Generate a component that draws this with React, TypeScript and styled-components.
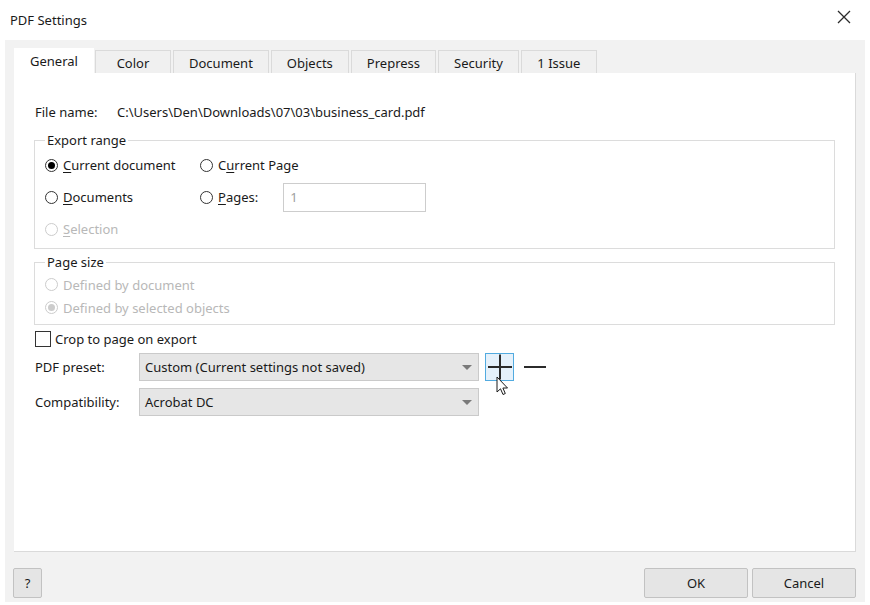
import styled, { createGlobalStyle } from "styled-components";

const GlobalStyle = createGlobalStyle`
  html, body {
    margin: 0;
    padding: 0;
    background: #ffffff;
  }
  body {
    font-family: "Noto Sans", "Open Sans", sans-serif;
    font-size: 13px;
    color: #1a1a1a;
  }
`;

const Window = styled.div`
  width: 870px;
  height: 605px;
  display: flex;
  flex-direction: column;
  background: #ffffff;
`;

const TitleBar = styled.div`
  height: 40px;
  display: flex;
  align-items: center;
  justify-content: space-between;
  padding: 0 18px 0 10px;
  box-sizing: border-box;
`;

const Title = styled.span`
  font-size: 13px;
  color: #1a1a1a;
`;

const CloseButton = styled.button`
  border: none;
  background: none;
  padding: 0;
  width: 16px;
  height: 16px;
  margin-top: -6px;
  display: flex;
  align-items: center;
  justify-content: center;
`;

const Body = styled.div`
  margin: 0 5px;
  height: 562px;
  background: #f2f2f2;
  display: flex;
  flex-direction: column;
  padding: 8px 9px 0 9px;
  box-sizing: border-box;
`;

const TabStrip = styled.div`
  display: flex;
  align-items: flex-end;
  gap: 2px;
  height: 25px;
`;

const Tab = styled.div<{ $active?: boolean }>`
  height: ${(p) => (p.$active ? "25px" : "23px")};
  min-width: ${(p) => (p.$active ? "80px" : "76px")};
  padding: 0 15px;
  box-sizing: border-box;
  display: flex;
  align-items: center;
  justify-content: center;
  background: ${(p) => (p.$active ? "#ffffff" : "#f0f0f0")};
  border: 1px solid ${(p) => (p.$active ? "#ffffff" : "#dadada")};
  border-bottom: none;
  color: #1a1a1a;
  padding-top: ${(p) => (p.$active ? "0" : "1px")};
  margin-right: ${(p) => (p.$active ? "-1px" : "0")};
`;

const Panel = styled.div`
  background: #ffffff;
  height: 479px;
  border-right: 1px solid #dadada;
  border-bottom: 1px solid #dadada;
  padding: 30px 20px 0 21px;
  box-sizing: border-box;
  display: flex;
  flex-direction: column;
`;

const FileRow = styled.div`
  display: flex;
  align-items: center;
  height: 18px;
  margin-bottom: 10px;
`;

const FieldLabel = styled.span<{ $width: number }>`
  width: ${(p) => p.$width}px;
  flex-shrink: 0;
`;

const Group = styled.fieldset<{ $rowHeight: number; $padTop: number; $padBottom: number }>`
  margin: 0 0 0 -1px;
  border: 1px solid #dcdcdc;
  padding: ${(p) => p.$padTop}px 10px ${(p) => p.$padBottom}px 10px;
  display: grid;
  grid-template-columns: 155px 1fr;
  grid-auto-rows: ${(p) => p.$rowHeight}px;
  align-items: center;
  min-width: 0;
  & + & {
    margin-top: 4px;
  }
`;

const Legend = styled.legend`
  padding: 0 2px;
  margin-left: 0;
  line-height: 18px;
  color: #1a1a1a;
`;

const Option = styled.label<{ $disabled?: boolean; $span?: boolean }>`
  display: flex;
  align-items: center;
  gap: 5px;
  color: ${(p) => (p.$disabled ? "#b8b8b8" : "#1a1a1a")};
  grid-column: ${(p) => (p.$span ? "1 / -1" : "auto")};
  white-space: nowrap;
`;

const Radio = styled.span<{ $checked?: boolean; $disabled?: boolean }>`
  width: 13px;
  height: 13px;
  border-radius: 50%;
  border: 1px solid ${(p) => (p.$disabled ? "#cccccc" : "#333333")};
  background: #ffffff;
  box-sizing: border-box;
  display: flex;
  align-items: center;
  justify-content: center;
  flex-shrink: 0;
  &::after {
    content: "";
    display: ${(p) => (p.$checked ? "block" : "none")};
    width: 7px;
    height: 7px;
    border-radius: 50%;
    background: ${(p) => (p.$disabled ? "#cccccc" : "#000000")};
  }
`;

const Key = styled.span`
  text-decoration: underline;
  text-underline-offset: 2px;
`;

const PagesCell = styled.div`
  display: flex;
  align-items: center;
`;

const PagesInput = styled.div`
  margin-left: 25px;
  width: 143px;
  height: 29px;
  border: 1px solid #cdcdcd;
  box-sizing: border-box;
  display: flex;
  align-items: center;
  padding-left: 6px;
  color: #a0a0a0;
  background: #ffffff;
`;

const CheckRow = styled.label`
  display: flex;
  align-items: center;
  gap: 4px;
  height: 20px;
  margin-top: 4px;
`;

const Checkbox = styled.span`
  width: 16px;
  height: 16px;
  border: 1px solid #333333;
  box-sizing: border-box;
  background: #ffffff;
`;

const FormRow = styled.div<{ $top: number }>`
  display: flex;
  align-items: center;
  margin-top: ${(p) => p.$top}px;
`;

const Select = styled.div`
  width: 340px;
  height: 28px;
  background: #e6e6e6;
  border: 1px solid #cacaca;
  box-sizing: border-box;
  display: flex;
  align-items: center;
  justify-content: space-between;
  padding: 0 6px 0 5px;
`;

const Caret = styled.span`
  width: 0;
  height: 0;
  border-left: 5px solid transparent;
  border-right: 5px solid transparent;
  border-top: 5px solid #7a7a7a;
`;

const IconButton = styled.button<{ $hover?: boolean }>`
  position: relative;
  width: 29px;
  height: 28px;
  margin-left: 6px;
  padding: 0;
  box-sizing: border-box;
  background: ${(p) => (p.$hover ? "#e5f1fb" : "transparent")};
  border: 1px solid ${(p) => (p.$hover ? "#52abe0" : "transparent")};
  display: flex;
  align-items: center;
  justify-content: center;
`;

const Pointer = styled.svg`
  position: absolute;
  left: 10px;
  top: 22px;
  pointer-events: none;
`;

const Footer = styled.div`
  display: flex;
  align-items: center;
  justify-content: space-between;
  padding: 16px 0 0 0;
  margin-left: -1px;
`;

const FooterButtons = styled.div`
  display: flex;
  gap: 4px;
`;

const DialogButton = styled.button<{ $width: number }>`
  width: ${(p) => p.$width}px;
  height: 30px;
  background: #e5e5e5;
  border: 1px solid #c2c2c2;
  border-radius: 2px;
  font-family: "Noto Sans", "Open Sans", sans-serif;
  font-size: 13px;
  color: #1a1a1a;
  padding: 0;
`;

const tabs = ["General", "Color", "Document", "Objects", "Prepress", "Security", "1 Issue"];

export default function App() {
  return (
    <Window>
      <GlobalStyle />
      <TitleBar>
        <Title>PDF Settings</Title>
        <CloseButton>
          <svg width="14" height="14" viewBox="0 0 14 14">
            <path d="M1 1 L13 13 M13 1 L1 13" stroke="#2b2b2b" strokeWidth="1.3" />
          </svg>
        </CloseButton>
      </TitleBar>
      <Body>
        <TabStrip>
          {tabs.map((t, i) => (
            <Tab key={t} $active={i === 0}>
              {t}
            </Tab>
          ))}
        </TabStrip>
        <Panel>
          <FileRow>
            <FieldLabel $width={82}>File name:</FieldLabel>
            <span>C:\Users\Den\Downloads\07\03\business_card.pdf</span>
          </FileRow>

          <Group $rowHeight={32} $padTop={0} $padBottom={3}>
            <Legend>Export range</Legend>
            <Option>
              <Radio $checked />
              <span>
                <Key>C</Key>urrent document
              </span>
            </Option>
            <Option>
              <Radio />
              <span>
                C<Key>u</Key>rrent Page
              </span>
            </Option>
            <Option>
              <Radio />
              <span>
                <Key>D</Key>ocuments
              </span>
            </Option>
            <PagesCell>
              <Option>
                <Radio />
                <span>
                  <Key>P</Key>ages:
                </span>
              </Option>
              <PagesInput>1</PagesInput>
            </PagesCell>
            <Option $disabled $span>
              <Radio $disabled />
              <span>
                <Key>S</Key>election
              </span>
            </Option>
          </Group>

          <Group $rowHeight={23} $padTop={2} $padBottom={5}>
            <Legend>Page size</Legend>
            <Option $disabled $span>
              <Radio $disabled />
              <span>Defined by document</span>
            </Option>
            <Option $disabled $span>
              <Radio $disabled $checked />
              <span>Defined by selected objects</span>
            </Option>
          </Group>

          <CheckRow>
            <Checkbox />
            <span>Crop to page on export</span>
          </CheckRow>

          <FormRow $top={4}>
            <FieldLabel $width={104}>PDF preset:</FieldLabel>
            <Select>
              <span>Custom (Current settings not saved)</span>
              <Caret />
            </Select>
            <IconButton $hover>
              <svg width="26" height="26" viewBox="0 0 26 26">
                <path d="M13 0.5 V25.5 M1 13 H25" stroke="#2b2b2b" strokeWidth="2" />
              </svg>
              <Pointer width="14" height="22" viewBox="0 0 14 22">
                <path
                  d="M1 1 L1 16 L4.5 12.8 L7 18.5 L9.3 17.5 L6.9 12 L11.5 12 Z"
                  fill="#ffffff"
                  stroke="#1a1a1a"
                  strokeWidth="1"
                  strokeLinejoin="round"
                />
              </Pointer>
            </IconButton>
            <IconButton>
              <svg width="24" height="4" viewBox="0 0 24 4">
                <path d="M1 2 H23" stroke="#2b2b2b" strokeWidth="2" />
              </svg>
            </IconButton>
          </FormRow>

          <FormRow $top={7}>
            <FieldLabel $width={104}>Compatibility:</FieldLabel>
            <Select>
              <span>Acrobat DC</span>
              <Caret />
            </Select>
          </FormRow>
        </Panel>
        <Footer>
          <DialogButton $width={29}>?</DialogButton>
          <FooterButtons>
            <DialogButton $width={104}>OK</DialogButton>
            <DialogButton $width={104}>Cancel</DialogButton>
          </FooterButtons>
        </Footer>
      </Body>
    </Window>
  );
}
